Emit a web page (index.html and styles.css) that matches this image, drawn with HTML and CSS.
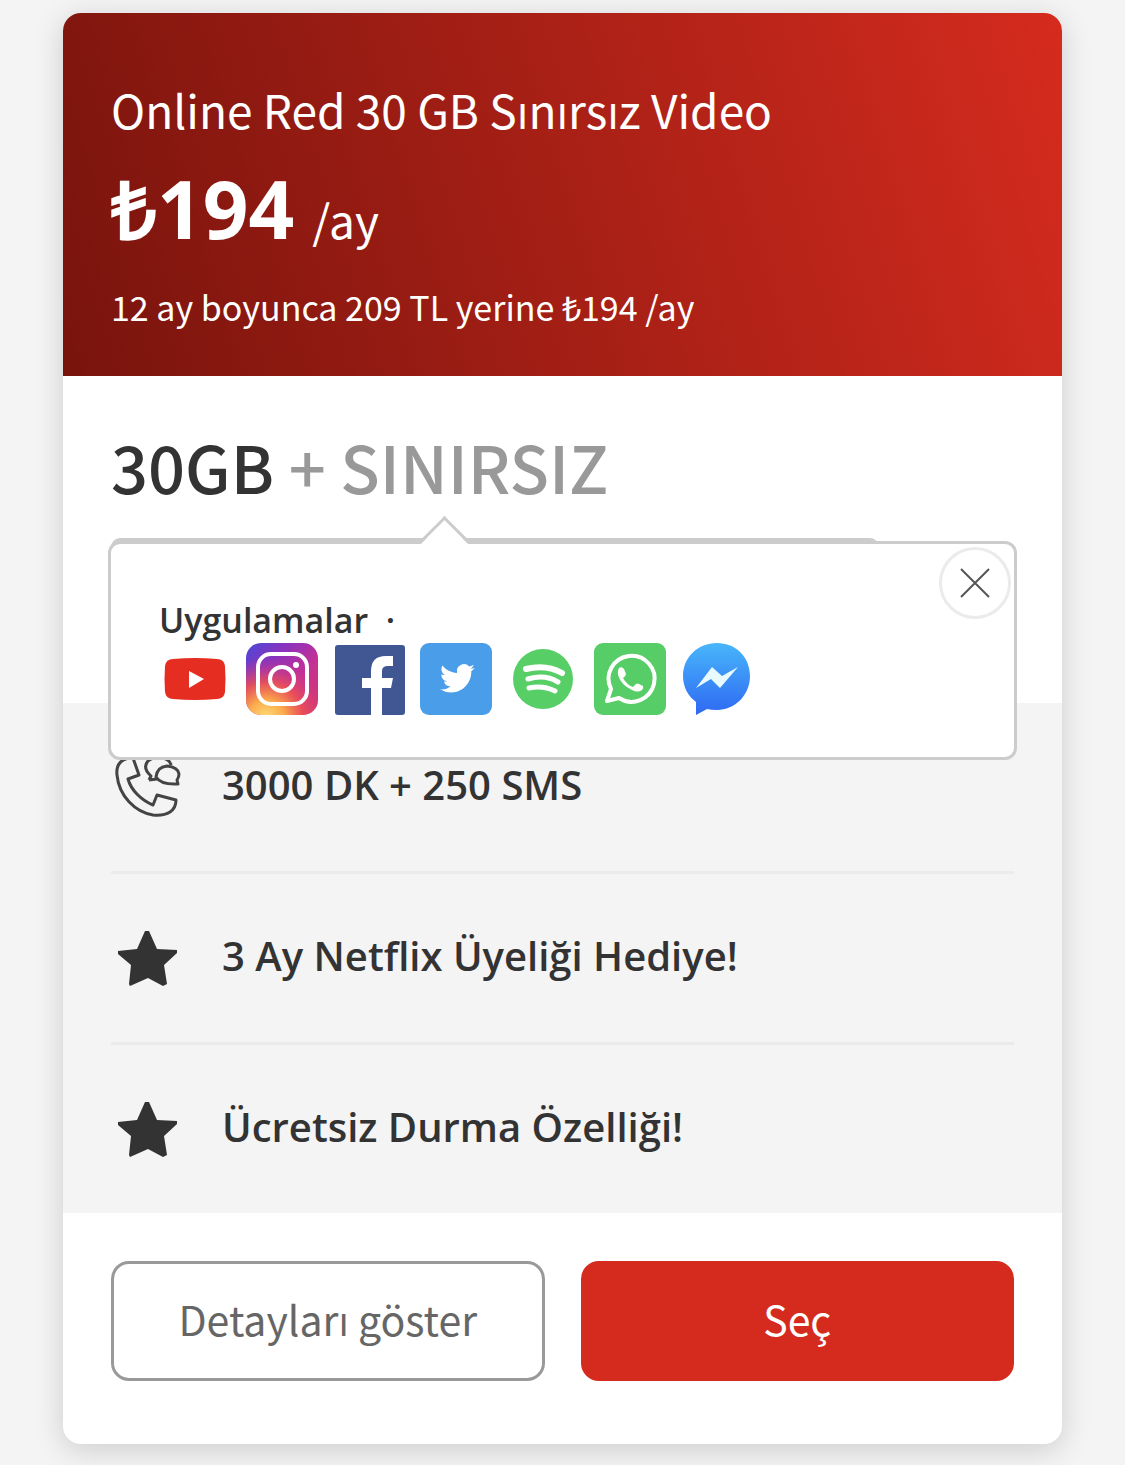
FILE: index.html
```html
<!DOCTYPE html>
<html lang="tr">
<head>
    <meta charset="UTF-8">
    <meta name="viewport" content="width=device-width, initial-scale=1.0">
    <title>Online Red 30 GB Sınırsız Video</title>
    <link rel="stylesheet" href="styles.css">
</head>
<body>

<div class="card">
    <div class="card-header">
        <h2 class="plan-name">Online Red 30 GB Sınırsız Video</h2>
        <p class="price"><strong>₺194</strong> <span>/ay</span></p>
        <p class="price-note">12 ay boyunca 209 TL yerine ₺194 /ay</p>
    </div>

    <div class="quota">
        <h3 class="quota-title">30GB <span>+ SINIRSIZ</span></h3>
        <div class="quota-bar">
            <div class="quota-fill"></div>
            <div class="popover">
                <button type="button" class="close" aria-label="Kapat">
                    <svg viewBox="0 0 30 30"><path d="M1 1L29 29M29 1L1 29"/></svg>
                </button>
                <p class="apps-title">Uygulamalar &nbsp;·</p>
                <div class="apps">
                    <!-- YouTube -->
                    <svg viewBox="0 0 72 72">
                        <path fill="#e62d22" d="M14 16Q36 14 58 16Q65 16 66 23Q67 36 66 49Q65 56 58 56Q36 58 14 56Q7 56 6 49Q5 36 6 23Q7 16 14 16Z"/>
                        <path fill="#fff" d="M30 28L45 36L30 45Z"/>
                    </svg>
                    <!-- Instagram -->
                    <svg viewBox="0 0 72 72">
                        <defs>
                            <linearGradient id="igBase" x1="0" y1="0" x2="1" y2="1">
                                <stop offset="0" stop-color="#4a48d8"/>
                                <stop offset=".3" stop-color="#8a33bd"/>
                                <stop offset=".6" stop-color="#c42f96"/>
                                <stop offset="1" stop-color="#d73a68"/>
                            </linearGradient>
                            <radialGradient id="igGlow" cx=".28" cy="1.05" r=".85">
                                <stop offset="0" stop-color="#ffe07a"/>
                                <stop offset=".3" stop-color="#fbab4c"/>
                                <stop offset=".6" stop-color="#ee5350" stop-opacity=".85"/>
                                <stop offset="1" stop-color="#d0358a" stop-opacity="0"/>
                            </radialGradient>
                        </defs>
                        <rect width="72" height="72" rx="15" fill="url(#igBase)"/>
                        <rect width="72" height="72" rx="15" fill="url(#igGlow)"/>
                        <rect x="12" y="11" width="49" height="50" rx="13" fill="none" stroke="#fff" stroke-width="4"/>
                        <circle cx="36" cy="36" r="12" fill="none" stroke="#fff" stroke-width="4"/>
                        <circle cx="50" cy="22" r="3" fill="#fff"/>
                    </svg>
                    <!-- Facebook -->
                    <svg viewBox="0 0 72 72">
                        <rect x="2" y="2" width="70" height="70" rx="3" fill="#415794"/>
                        <path fill="#fff" d="M38 72V45H29V35H38V28Q38 13 53 13H60V23H55Q49 23 49 28V35H60L58 45H49V72Z"/>
                    </svg>
                    <!-- Twitter -->
                    <svg viewBox="0 0 72 72">
                        <rect width="72" height="72" rx="9" fill="#4a9de9"/>
                        <path fill="#fff" transform="translate(20 18) scale(1.45)" d="M23.95 4.57a10 10 0 0 1-2.82.77 4.96 4.96 0 0 0 2.16-2.72c-.95.55-2 .95-3.13 1.18a4.92 4.92 0 0 0-8.38 4.48C7.69 8.1 4.07 6.13 1.64 3.16a4.92 4.92 0 0 0 1.52 6.57 4.9 4.9 0 0 1-2.23-.61v.06a4.92 4.92 0 0 0 3.95 4.83 5 5 0 0 1-2.21.08 4.94 4.94 0 0 0 4.6 3.42A9.87 9.87 0 0 1 0 19.54a14 14 0 0 0 7.55 2.21c9.14 0 14.31-7.72 14.01-14.64a10 10 0 0 0 2.39-2.54z"/>
                    </svg>
                    <!-- Spotify -->
                    <svg viewBox="0 0 72 72">
                        <circle cx="36" cy="36" r="30" fill="#57cf66"/>
                        <path fill="none" stroke="#fff" stroke-width="6" stroke-linecap="round" d="M19 26Q39 21 55 30"/>
                        <path fill="none" stroke="#fff" stroke-width="5" stroke-linecap="round" d="M21 36Q38 31 51 39M22 45Q36 42 48 48"/>
                    </svg>
                    <!-- WhatsApp -->
                    <svg viewBox="0 0 72 72">
                        <rect width="72" height="72" rx="9" fill="#57cd67"/>
                        <path fill="none" stroke="#fff" stroke-width="4" stroke-linejoin="round" d="M13 58L17 46A23 23 0 1 1 25 55Z"/>
                        <path fill="#fff" d="M25 25Q28 23 30 26L32 31Q32 33 29 35Q33 42 39 44L42 41Q43 40 45 41L49 43Q50 45 48 47Q44 50 38 47Q27 42 24 32Q23 28 25 25Z"/>
                    </svg>
                    <!-- Messenger -->
                    <svg viewBox="0 0 72 72">
                        <defs>
                            <linearGradient id="msg" x1="0" y1="0" x2="0" y2="1">
                                <stop offset="0" stop-color="#48b6fa"/>
                                <stop offset="1" stop-color="#2f68f3"/>
                            </linearGradient>
                        </defs>
                        <path fill="url(#msg)" d="M36 0C55 0 69 14 69 33S54 67 36 67Q30 67 26 66L15 72V59C7 53 2 44 2 33C2 14 17 0 36 0Z"/>
                        <path fill="#e9fafe" d="M15 45L31 24L41 33L57 24L39 45L30 36Z"/>
                    </svg>
                </div>
            </div>
        </div>
    </div>

    <ul class="features">
        <li>
            <svg class="icon icon-line" viewBox="0 0 72 72">
                <path d="M18 7C8 9 5 15 6 24C8 45 24 61 42 64Q53 65 59 61Q65 57 65 49L46 44L42 54C30 49 20 39 17 28L28 24L22 7Z"/>
                <path d="M38 29L40 25Q31 17 37 10Q43 5 52 7Q59 9 60 14M38 29L46 28"/>
                <path d="M45 26Q46 16 56 15Q67 16 68 23Q68 26 66 29L67 33Q50 34 45 26Z"/>
            </svg>
            <span>3000 DK + 250 SMS</span>
        </li>
        <li>
            <svg class="icon" viewBox="0 0 72 72"><path d="M34 9H38L46 27L66 28V31L53 43L56 62L52 64L37 56L19 64L18 62L20 43L7 32V29L26 27Z"/></svg>
            <span>3 Ay Netflix Üyeliği Hediye!</span>
        </li>
        <li>
            <svg class="icon" viewBox="0 0 72 72"><path d="M34 9H38L46 27L66 28V31L53 43L56 62L52 64L37 56L19 64L18 62L20 43L7 32V29L26 27Z"/></svg>
            <span>Ücretsiz Durma Özelliği!</span>
        </li>
    </ul>

    <div class="actions">
        <button type="button" class="btn btn-outline">Detayları göster</button>
        <button type="button" class="btn btn-primary">Seç</button>
    </div>
</div>

</body>
</html>
```
FILE: styles.css
```css
* {
    box-sizing: border-box;
}
body {
    margin: 0;
    padding: 13px 63px 21px;
    background-color: #f4f4f4;
    color: #333;
    font-family: "Noto Sans CJK SC", "Open Sans", sans-serif;
}
h2, h3, p, ul {
    margin: 0;
    padding: 0;
}
.card {
    background-color: white;
    border-radius: 18px;
    box-shadow: 0 6px 30px rgba(0, 0, 0, 0.16);
}
.card-header {
    padding: 66px 48px 42px;
    border-radius: 18px 18px 0 0;
    background: linear-gradient(73deg, #78140d, #d52b1e);
    color: white;
}
.plan-name {
    font-size: 46px;
    line-height: 60px;
    font-weight: 400;
}
.price {
    display: flex;
    align-items: baseline;
    gap: 18px;
    height: 96px;
    margin-top: 24px;
    font-size: 46px;
    line-height: 90px;
}
.price strong {
    font-family: "Open Sans", sans-serif;
    font-size: 80px;
}
.price-note {
    margin-top: 21px;
    font-size: 34px;
    line-height: 54px;
}
.quota {
    height: 327px;
    padding: 48px 48px 0;
}
.quota-title {
    font-size: 65px;
    line-height: 84px;
    font-weight: 500;
}
.quota-title span {
    color: #999;
}
.quota-bar {
    position: relative;
    margin-top: 30px;
}
.quota-fill {
    width: 85%;
    height: 18px;
    border-radius: 9px;
    background-color: #ccc;
}
.popover {
    position: absolute;
    top: 3px;
    left: -3px;
    right: -3px;
    padding: 54px 48px 42px;
    background-color: white;
    border: 3px solid #ccc;
    border-radius: 12px;
}
.popover::before {
    content: "";
    position: absolute;
    top: -20px;
    left: 314px;
    width: 33px;
    height: 33px;
    background: linear-gradient(135deg, white 55%, transparent 55%);
    border: 3px solid #ccc;
    border-right-color: transparent;
    border-bottom-color: transparent;
    transform: rotate(45deg);
}
.close {
    position: absolute;
    top: 3px;
    right: 3px;
    display: flex;
    align-items: center;
    justify-content: center;
    width: 72px;
    height: 72px;
    padding: 0;
    background-color: white;
    border: 3px solid #ebebeb;
    border-radius: 50%;
}
.close svg {
    width: 30px;
    height: 30px;
    stroke: #555;
    stroke-width: 2;
}
.apps-title {
    font-family: "Open Sans", sans-serif;
    font-size: 34px;
    line-height: 45px;
    font-weight: 600;
}
.apps {
    display: flex;
    gap: 15px;
}
.apps svg {
    width: 72px;
    height: 72px;
}
.features {
    list-style: none;
    padding: 0 48px;
    background-color: #f4f4f4;
    font-family: "Open Sans", sans-serif;
}
.features li {
    display: flex;
    align-items: center;
    gap: 39px;
    height: 171px;
    border-bottom: 3px solid #ebebeb;
    font-size: 40px;
    font-weight: 600;
}
.features li:last-child {
    height: 168px;
    border-bottom: 0;
}
.features span {
    padding-bottom: 6px;
}
.icon {
    width: 72px;
    height: 72px;
    fill: #333;
}
.icon-line {
    fill: none;
    stroke: #444;
    stroke-width: 3;
    stroke-linejoin: round;
}
.actions {
    display: flex;
    gap: 36px;
    padding: 48px 48px 63px;
}
.btn {
    flex: 1;
    height: 120px;
    padding: 0 0 6px;
    border: 3px solid #999;
    border-radius: 18px;
    font-family: inherit;
    font-size: 41px;
}
.btn-outline {
    background-color: white;
    color: #666;
}
.btn-primary {
    background-color: #d52b1e;
    border-color: #d52b1e;
    color: white;
}
```
